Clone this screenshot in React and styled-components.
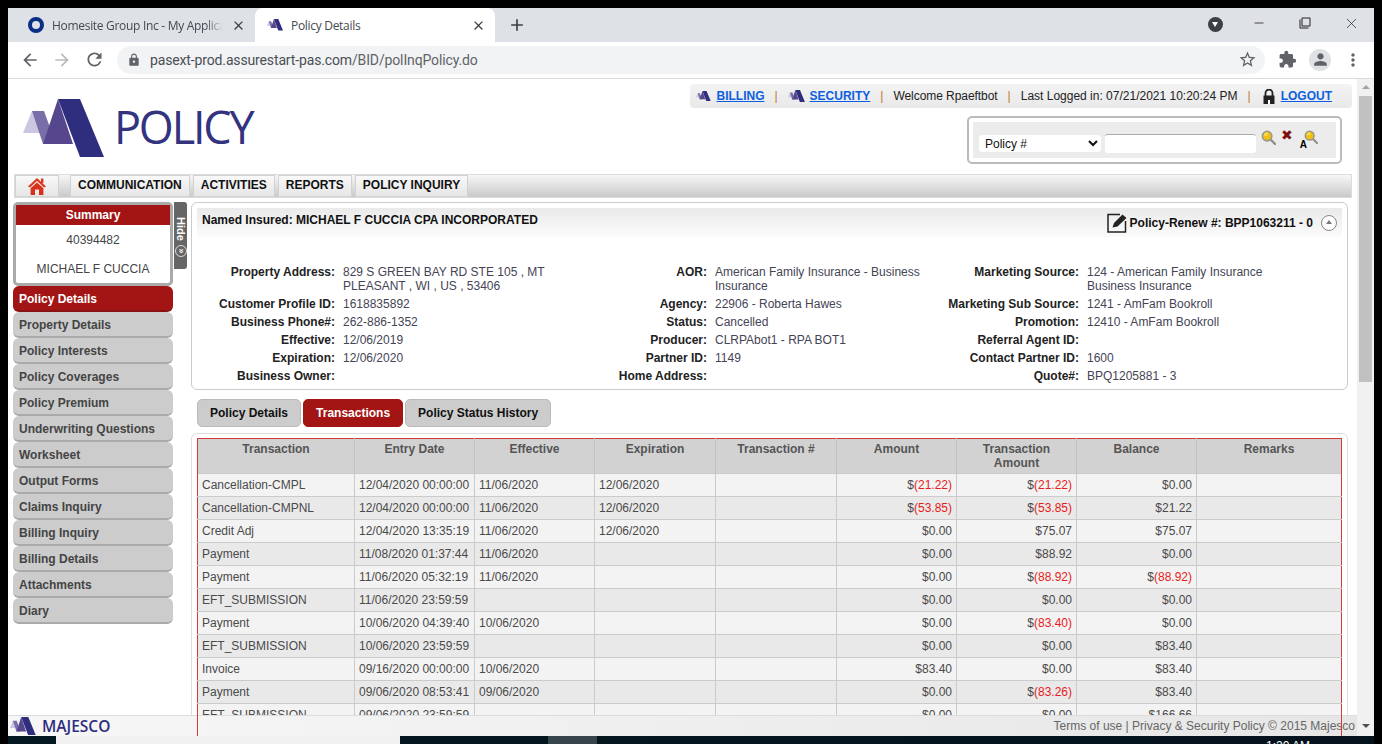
import React from 'react'
import styled, { createGlobalStyle } from 'styled-components'
import {
  MdArrowBack, MdArrowForward, MdRefresh, MdLock, MdStarBorder, MdExtension,
  MdMoreVert, MdClose, MdAdd, MdPerson, MdFilterNone,
} from 'react-icons/md'
import { Minus, X } from 'lucide-react'

const GlobalStyle = createGlobalStyle`
  html, body { margin: 0; padding: 0; height: 100%; background: #000; overflow: hidden; }
  * { box-sizing: border-box; }
  body { font-family: "Liberation Sans", Arial, sans-serif; font-size: 12px; }
`

const sidebarItems = [
  'Policy Details', 'Property Details', 'Policy Interests', 'Policy Coverages', 'Policy Premium',
  'Underwriting Questions', 'Worksheet', 'Output Forms', 'Claims Inquiry', 'Billing Inquiry',
  'Billing Details', 'Attachments', 'Diary',
]

const details = [
  ['Property Address:', '829 S GREEN BAY RD STE 105 , MT PLEASANT , WI , US , 53406', 'AOR:', 'American Family Insurance - Business Insurance', 'Marketing Source:', <>124 - American Family Insurance<br />Business Insurance</>],
  ['Customer Profile ID:', '1618835892', 'Agency:', '22906 - Roberta Hawes', 'Marketing Sub Source:', '1241 - AmFam Bookroll'],
  ['Business Phone#:', '262-886-1352', 'Status:', 'Cancelled', 'Promotion:', '12410 - AmFam Bookroll'],
  ['Effective:', '12/06/2019', 'Producer:', 'CLRPAbot1 - RPA BOT1', 'Referral Agent ID:', ''],
  ['Expiration:', '12/06/2020', 'Partner ID:', '1149', 'Contact Partner ID:', '1600'],
  ['Business Owner:', '', 'Home Address:', '', 'Quote#:', 'BPQ1205881 - 3'],
]

const columns = [
  ['Transaction', 157], ['Entry Date', 120], ['Effective', 120], ['Expiration', 121], ['Transaction #', 121],
  ['Amount', 120], ['Transaction Amount', 120], ['Balance', 120], ['Remarks', 145],
]

const rows = [
  ['Cancellation-CMPL', '12/04/2020 00:00:00', '11/06/2020', '12/06/2020', '$(21.22)', '$(21.22)', '$0.00'],
  ['Cancellation-CMPNL', '12/04/2020 00:00:00', '11/06/2020', '12/06/2020', '$(53.85)', '$(53.85)', '$21.22'],
  ['Credit Adj', '12/04/2020 13:35:19', '11/06/2020', '12/06/2020', '$0.00', '$75.07', '$75.07'],
  ['Payment', '11/08/2020 01:37:44', '11/06/2020', '', '$0.00', '$88.92', '$0.00'],
  ['Payment', '11/06/2020 05:32:19', '11/06/2020', '', '$0.00', '$(88.92)', '$(88.92)'],
  ['EFT_SUBMISSION', '11/06/2020 23:59:59', '', '', '$0.00', '$0.00', '$0.00'],
  ['Payment', '10/06/2020 04:39:40', '10/06/2020', '', '$0.00', '$(83.40)', '$0.00'],
  ['EFT_SUBMISSION', '10/06/2020 23:59:59', '', '', '$0.00', '$0.00', '$83.40'],
  ['Invoice', '09/16/2020 00:00:00', '10/06/2020', '', '$83.40', '$0.00', '$83.40'],
  ['Payment', '09/06/2020 08:53:41', '09/06/2020', '', '$0.00', '$(83.26)', '$83.40'],
  ['EFT_SUBMISSION', '09/06/2020 23:59:59', '', '', '$0.00', '$0.00', '$166.66'],
]

const LogoMark = ({ width }) => (
  <svg width={width} viewBox="0 0 81 58" style={{ display: 'block', flexShrink: 0 }}>
    <polygon points="0,34 9,12 18,34" fill="#cbc7e2" />
    <polygon points="9,12 21,12 33,45 20,45" fill="#7a6ea9" />
    <polygon points="35,0 20,45 50,45" fill="#56468e" />
    <polygon points="35,0 57,0 81,58 57,58" fill="#2f2e7e" />
  </svg>
)

const Magnifier = ({ size }) => (
  <svg width={size} height={size} viewBox="0 0 16 16" style={{ display: 'block' }}>
    <line x1="10" y1="10" x2="15" y2="15" stroke="#8d8d80" strokeWidth="2.4" strokeLinecap="round" />
    <circle cx="6.5" cy="6.5" r="5" fill="#f2c010" stroke="#9a9a88" strokeWidth="1.8" />
    <path d="M3 6 A4 4 0 0 1 7 2.5 L7 6 Z" fill="#f7dc5a" />
  </svg>
)

const HomeIcon = () => (
  <svg width="18" height="18" viewBox="0 0 18 18" style={{ display: 'block' }}>
    <path d="M9 1 L18 9.5 L16 10.5 L9 4 L2 10.5 L0 9.5 Z" fill="#dc3a1e" />
    <path d="M9 5.4 L15.4 11.2 V18 H11 V12.5 H7 V18 H2.6 V11.2 Z" fill="#d9301a" />
    <rect x="13" y="1.5" width="2.4" height="4.5" fill="#dc3a1e" />
  </svg>
)

const PadlockIcon = () => (
  <svg width="12" height="15" viewBox="0 0 12 15" style={{ display: 'block' }}>
    <path d="M2.5 7 V4 A3.5 3.5 0 0 1 9.5 4 V7" fill="none" stroke="#222" strokeWidth="1.8" />
    <rect x="0.5" y="6.5" width="11" height="8.5" fill="#222" />
    <rect x="5" y="11" width="2" height="4" fill="#fff" />
  </svg>
)

const EditIcon = () => (
  <svg width="21" height="20" viewBox="0 0 21 20" style={{ display: 'block' }}>
    <path d="M13 1.5 H1 V19 H18.5 V8" fill="none" stroke="#222" strokeWidth="1.5" />
    <path d="M5.5 14.5 L7 10 L15.5 1.5 L19.5 5 L10.5 13.5 Z" fill="#222" />
  </svg>
)

const App = () => (
  <Screen>
    <GlobalStyle />
    <BrowserWindow>
      <TabStrip>
        <Tab>
          <RingIcon />
          <TabTitle $fade>Homesite Group Inc - My Application</TabTitle>
          <TabClose><MdClose size={15} /></TabClose>
        </Tab>
        <Tab $active>
          <LogoMark width={16} />
          <TabTitle>Policy Details</TabTitle>
          <TabClose><MdClose size={15} /></TabClose>
        </Tab>
        <NewTab><MdAdd size={20} /></NewTab>
        <WindowControls>
          <ProfileDot />
          <WindowButton><Minus size={14} strokeWidth={1.4} /></WindowButton>
          <WindowButton><MdFilterNone size={12} /></WindowButton>
          <WindowButton><X size={17} strokeWidth={1} /></WindowButton>
        </WindowControls>
      </TabStrip>

      <Toolbar>
        <ToolButton><MdArrowBack size={20} /></ToolButton>
        <ToolButton $dim><MdArrowForward size={20} /></ToolButton>
        <ToolButton><MdRefresh size={21} /></ToolButton>
        <Omnibox>
          <MdLock size={14} color="#5f6368" />
          <Url><b>pasext-prod.assurestart-pas.com</b>/BID/polInqPolicy.do</Url>
          <MdStarBorder size={19} color="#5f6368" />
        </Omnibox>
        <ToolActions>
          <MdExtension size={19} color="#5f6368" />
          <Avatar><MdPerson size={19} color="#5f6368" /></Avatar>
          <MdMoreVert size={20} color="#5f6368" />
        </ToolActions>
      </Toolbar>

      <Viewport>
        <Page>
          <Header>
            <Brand>
              <LogoMark width={81} />
              <BrandName>POLICY</BrandName>
            </Brand>
            <HeaderRight>
              <UtilityBar>
                <LogoMark width={15} />
                <UtilityLink $icon>BILLING</UtilityLink>
                <Divider>|</Divider>
                <LogoMark width={17} />
                <UtilityLink $icon>SECURITY</UtilityLink>
                <Divider>|</Divider>
                <WelcomeText>Welcome Rpaeftbot</WelcomeText>
                <Divider>|</Divider>
                <span>Last Logged in: 07/21/2021 10:20:24 PM</span>
                <Divider>|</Divider>
                <PadlockHolder><PadlockIcon /></PadlockHolder>
                <UtilityLink>LOGOUT</UtilityLink>
              </UtilityBar>
              <SearchBox>
                <SearchInner>
                  <SearchSelect defaultValue="policy">
                    <option value="policy">Policy #</option>
                  </SearchSelect>
                  <SearchInput />
                  <SearchIcon $left={5}><Magnifier size={15} /></SearchIcon>
                  <ClearMark>✖</ClearMark>
                  <SearchIcon $left={11}>
                    <Magnifier size={14} />
                    <SmallA>A</SmallA>
                  </SearchIcon>
                </SearchInner>
              </SearchBox>
            </HeaderRight>
          </Header>

          <NavBar>
            <HomeButton><HomeIcon /></HomeButton>
            <NavButton>COMMUNICATION</NavButton>
            <NavButton>ACTIVITIES</NavButton>
            <NavButton>REPORTS</NavButton>
            <NavButton>POLICY INQUIRY</NavButton>
          </NavBar>

          <Body>
            <Sidebar>
              <SummaryCard>
                <SummaryTitle>Summary</SummaryTitle>
                <SummaryLine>40394482</SummaryLine>
                <SummaryLine>MICHAEL F CUCCIA</SummaryLine>
              </SummaryCard>
              {sidebarItems.map((item, i) => (
                <SideItem key={item} $active={i === 0}>{item}</SideItem>
              ))}
            </Sidebar>
            <HideTab>
              <HideText>Hide</HideText>
              <HideCircle>«</HideCircle>
            </HideTab>

            <Main>
              <Panel>
                <PanelHead>
                  <span>Named Insured: MICHAEL F CUCCIA CPA INCORPORATED</span>
                  <PanelHeadRight>
                    <EditIcon />
                    <span>Policy-Renew #: BPP1063211 - 0</span>
                    <CollapseButton />
                  </PanelHeadRight>
                </PanelHead>
                <DetailGrid>
                  {details.flat().map((cell, i) => (
                    i % 2 === 0
                      ? <DetailLabel key={i}>{cell}</DetailLabel>
                      : <DetailValue key={i}>{cell}</DetailValue>
                  ))}
                </DetailGrid>
              </Panel>

              <TabRow>
                <PillTab>Policy Details</PillTab>
                <PillTab $active>Transactions</PillTab>
                <PillTab>Policy Status History</PillTab>
              </TabRow>

              <TablePanel>
                <Table>
                  <colgroup>
                    {columns.map(([name, w]) => <col key={name} width={w} />)}
                  </colgroup>
                  <thead>
                    <tr>
                      {columns.map(([name]) => <Th key={name}>{name}</Th>)}
                    </tr>
                  </thead>
                  <tbody>
                    {rows.map((row, i) => (
                      <Tr key={i} $odd={i % 2 === 1}>
                        <Td>{row[0]}</Td>
                        <Td>{row[1]}</Td>
                        <Td>{row[2]}</Td>
                        <Td>{row[3]}</Td>
                        <Td />
                        {row.slice(4).map((money, j) => (
                          <Td key={j} $right><Money value={money} /></Td>
                        ))}
                        <Td />
                      </Tr>
                    ))}
                  </tbody>
                </Table>
              </TablePanel>
            </Main>
          </Body>

          <Footer>
            <FooterBrand>
              <LogoMark width={26} />
              <FooterName>MAJESCO</FooterName>
            </FooterBrand>
            <FooterRule $left={189} />
            <FooterRule $left={1333} />
            <FooterLinks>Terms of use | Privacy &amp; Security Policy © 2015 Majesco</FooterLinks>
          </Footer>
        </Page>

        <Scrollbar>
          <ScrollArrow $up />
          <ScrollThumb />
          <ScrollSpacer />
          <ScrollArrow />
        </Scrollbar>
      </Viewport>
    </BrowserWindow>

    <Taskbar>
      <TaskSearch />
      <TaskTile />
      <TaskClock>1:20 AM</TaskClock>
    </Taskbar>
  </Screen>
)

const Money = ({ value }) => {
  if (value.startsWith('$(')) {
    return <>$<Negative>{value.slice(1)}</Negative></>
  }
  return value
}

const Screen = styled.div`
  width: 1382px;
  height: 744px;
  padding: 8px 8px 0;
  display: flex;
  flex-direction: column;
  overflow: hidden;
  background: #000;
`

const BrowserWindow = styled.div`
  height: 728px;
  flex-shrink: 0;
  display: flex;
  flex-direction: column;
  background: #fff;
  overflow: hidden;
`

const TabStrip = styled.div`
  height: 34px;
  flex-shrink: 0;
  display: flex;
  align-items: stretch;
  background: #dee1e6;
`

const Tab = styled.div`
  width: ${({ $active }) => ($active ? '240px' : '247px')};
  display: flex;
  align-items: center;
  gap: 8px;
  padding: 0 9px 0 ${({ $active }) => ($active ? '12px' : '20px')};
  border-radius: 8px 8px 0 0;
  background: ${({ $active }) => ($active ? '#fff' : 'transparent')};
  color: #45494e;
  font-family: "Open Sans", sans-serif;
  font-size: 12px;
  letter-spacing: -0.3px;
`

const RingIcon = styled.span`
  width: 16px;
  height: 16px;
  flex-shrink: 0;
  border-radius: 50%;
  border: 4px solid #0b2f86;
`

const TabTitle = styled.span`
  flex: 1;
  white-space: nowrap;
  overflow: hidden;
  mask-image: ${({ $fade }) => ($fade ? 'linear-gradient(to right, #000 90%, transparent)' : 'none')};
`

const TabClose = styled.span`
  display: flex;
  color: #3c4043;
`

const NewTab = styled.span`
  margin-left: 12px;
  display: flex;
  align-items: center;
  color: #3c4043;
`

const WindowControls = styled.div`
  margin-left: auto;
  display: flex;
  align-items: center;
  padding-bottom: 4px;
`

const ProfileDot = styled.span`
  width: 15px;
  height: 15px;
  margin: 3px 13px 0 0;
  border-radius: 50%;
  background: #3c4043;
  position: relative;
  &::after {
    content: '';
    position: absolute;
    left: 4px;
    top: 5px;
    border-left: 3.5px solid transparent;
    border-right: 3.5px solid transparent;
    border-top: 5px solid #fff;
  }
`

const WindowButton = styled.span`
  width: 46px;
  display: flex;
  justify-content: center;
  color: #222;
`

const Toolbar = styled.div`
  height: 37px;
  flex-shrink: 0;
  display: flex;
  align-items: center;
  padding: 0 11px 1px 6px;
  background: #fff;
  border-bottom: 1px solid #dadce0;
`

const ToolButton = styled.span`
  width: 32px;
  display: flex;
  justify-content: center;
  color: ${({ $dim }) => ($dim ? '#b8babd' : '#5f6368')};
`

const Omnibox = styled.div`
  width: 1148px;
  height: 28px;
  margin-left: 7px;
  padding: 0 8px 0 10px;
  display: flex;
  align-items: center;
  border-radius: 14px;
  background: #f1f3f4;
`

const Url = styled.span`
  flex: 1;
  margin-left: 9px;
  font-family: Roboto, sans-serif;
  font-size: 14px;
  letter-spacing: -0.14px;
  color: #5f6368;
  b {
    font-weight: 400;
    color: #4b4f54;
  }
`

const ToolActions = styled.div`
  flex: 1;
  display: flex;
  align-items: center;
  justify-content: space-between;
  padding-left: 13px;
`

const Avatar = styled.span`
  width: 22px;
  height: 22px;
  display: flex;
  align-items: center;
  justify-content: center;
  border-radius: 50%;
  background: #dfe1e5;
`

const Viewport = styled.div`
  flex: 1;
  min-height: 0;
  display: flex;
`

const Page = styled.div`
  flex: 1;
  min-width: 0;
  position: relative;
  overflow: hidden;
  background: #fff;
`

const Header = styled.div`
  height: 95px;
  display: flex;
  justify-content: space-between;
  padding: 0 5px 0 15px;
`

const Brand = styled.div`
  display: flex;
  align-items: flex-start;
  gap: 10px;
  padding-top: 20px;
`

const BrandName = styled.span`
  font-family: "Open Sans", sans-serif;
  font-size: 45px;
  line-height: 1;
  margin-top: 5px;
  letter-spacing: -2.2px;
  color: #33337f;
`

const HeaderRight = styled.div`
  display: flex;
  flex-direction: column;
  align-items: flex-end;
  padding-top: 5px;
`

const UtilityBar = styled.div`
  width: 662px;
  height: 24px;
  display: flex;
  align-items: center;
  justify-content: flex-end;
  padding-right: 20px;
  border-radius: 4px;
  background: linear-gradient(to bottom, #f3f3f3, #e9e9e9);
  color: #222;
`

const UtilityLink = styled.a`
  margin-left: ${({ $icon }) => ($icon ? '5px' : '6px')};
  font-weight: 700;
  color: #0d5fe0;
  text-decoration: underline;
`

const WelcomeText = styled.span`
  letter-spacing: -0.06px;
`

const Divider = styled.span`
  margin: 0 10px;
  color: #b8792a;
`

const PadlockHolder = styled.span`
  margin-left: 2px;
`

const SearchBox = styled.div`
  width: 375px;
  height: 48px;
  margin: 8px 10px 0 0;
  padding: 4px;
  border: 2px solid #bbb;
  border-radius: 5px;
`

const SearchInner = styled.div`
  height: 100%;
  display: flex;
  align-items: flex-start;
  padding: 12px 6px 0;
  background: #ececec;
`

const SearchSelect = styled.select`
  width: 122px;
  height: 17px;
  margin-top: 1px;
  padding-left: 2px;
  border: none;
  border-radius: 4px;
  background-color: #fff;
  font-family: "Liberation Sans", sans-serif;
  font-size: 12px;
  color: #111;
`

const SearchInput = styled.input`
  width: 151px;
  height: 19px;
  margin-left: 4px;
  border: none;
  border-top: 1px solid #aaa;
  border-radius: 3px;
  background: #fff;
`

const SearchIcon = styled.span`
  position: relative;
  margin: -4px 0 0 ${({ $left }) => $left}px;
`

const SmallA = styled.span`
  position: absolute;
  left: -4px;
  top: 10px;
  font-size: 10px;
  font-weight: 700;
  line-height: 1;
  color: #000;
`

const ClearMark = styled.span`
  margin: -7px 0 0 5px;
  font-family: "DejaVu Sans", sans-serif;
  font-size: 14px;
  line-height: 16px;
  color: #7c1010;
`

const NavBar = styled.div`
  height: 24px;
  margin: 0 5px 0 6px;
  display: flex;
  gap: 3px;
  border: 1px solid #dcdcdc;
  background: linear-gradient(to bottom, #f7f7f7, #c9c9c9);
`

const NavButton = styled.div`
  height: 22px;
  padding: 0 7px 2px;
  display: flex;
  align-items: center;
  border: 1px solid #d2d2d2;
  background: linear-gradient(to bottom, #f9f9f9, #e6e6e6);
  font-weight: 700;
  color: #111;
`

const HomeButton = styled(NavButton)`
  width: 44px;
  margin-right: 8px;
  justify-content: center;
  padding: 0;
`

const Body = styled.div`
  display: flex;
  align-items: flex-start;
  padding: 4px 0 0 5px;
`

const Sidebar = styled.div`
  width: 160px;
  flex-shrink: 0;
`

const SummaryCard = styled.div`
  height: 84px;
  border: 3px solid #aaa;
  border-radius: 5px;
  background: #fff;
  text-align: center;
  color: #444;
`

const SummaryTitle = styled.div`
  height: 20px;
  line-height: 21px;
  background: #a31515;
  color: #fff;
  font-weight: 700;
`

const SummaryLine = styled.div`
  height: 29px;
  line-height: 31px;
`

const SideItem = styled.div`
  height: 26px;
  line-height: 26px;
  padding-left: 6px;
  border-radius: 6px;
  border-bottom: 2px solid ${({ $active }) => ($active ? '#8a1212' : '#aaa')};
  background: ${({ $active }) => ($active ? '#a31515' : '#cccccc')};
  color: ${({ $active }) => ($active ? '#fff' : '#444')};
  font-weight: 700;
`

const HideTab = styled.div`
  width: 13px;
  height: 67px;
  flex-shrink: 0;
  margin: 0 4px 0 1px;
  display: flex;
  flex-direction: column;
  align-items: center;
  padding-top: 15px;
  border-radius: 0 3px 3px 0;
  background: #666;
  color: #fff;
`

const HideText = styled.span`
  writing-mode: vertical-rl;
  font-size: 11px;
  font-weight: 700;
  line-height: 13px;
`

const HideCircle = styled.span`
  width: 12px;
  height: 12px;
  flex-shrink: 0;
  margin-top: 4px;
  display: flex;
  align-items: center;
  justify-content: center;
  border: 1px solid #ddd;
  border-radius: 50%;
  font-size: 9px;
  font-weight: 700;
  line-height: 1;
  transform: rotate(-90deg);
`

const Main = styled.div`
  width: 1157px;
  flex-shrink: 0;
`

const Panel = styled.div`
  height: 188px;
  padding: 5px;
  border: 1px solid #ccc;
  border-radius: 6px;
`

const PanelHead = styled.div`
  height: 29px;
  display: flex;
  justify-content: space-between;
  padding: 5px 5px 0 5px;
  background: linear-gradient(to bottom, #eaeaea, #fbfbfb);
  font-weight: 700;
  line-height: 14px;
  color: #111;
`

const PanelHeadRight = styled.div`
  display: flex;
  align-items: center;
  height: 20px;
  gap: 2px;
`

const CollapseButton = styled.span`
  width: 16px;
  height: 16px;
  margin-left: 6px;
  position: relative;
  border: 1px solid #888;
  border-radius: 50%;
  background: #fff;
  &::after {
    content: '';
    position: absolute;
    left: 3.5px;
    top: 4px;
    border-left: 3.5px solid transparent;
    border-right: 3.5px solid transparent;
    border-bottom: 4px solid #777;
  }
`

const DetailGrid = styled.div`
  display: grid;
  grid-template-columns: 138px 210px 146px 210px 146px 254px;
  column-gap: 8px;
  row-gap: 4px;
  padding-top: 28px;
  line-height: 14px;
`

const DetailLabel = styled.div`
  text-align: right;
  font-weight: 700;
  color: #222;
`

const DetailValue = styled.div`
  color: #445;
`

const TabRow = styled.div`
  display: flex;
  gap: 2px;
  margin: 9px 0 6px 6px;
`

const PillTab = styled.div`
  height: 28px;
  line-height: 26px;
  padding: 0 12px;
  border: 1px solid ${({ $active }) => ($active ? '#a31515' : '#bbb')};
  border-radius: 5px;
  background: ${({ $active }) => ($active ? '#a31515' : '#cccccc')};
  color: ${({ $active }) => ($active ? '#fff' : '#111')};
  font-weight: 700;
`

const TablePanel = styled.div`
  padding: 4px 5px 8px;
  border: 1px solid #ddd;
  border-radius: 6px;
`

const Table = styled.table`
  width: 1144px;
  table-layout: fixed;
  border-collapse: collapse;
  border: 1px solid #d33a3a;
`

const Th = styled.th`
  height: 35px;
  padding: 3px 5px 0;
  vertical-align: top;
  background: #d2d2d2;
  border-right: 1px solid #c2c2c2;
  font-weight: 700;
  line-height: 14px;
  color: #555;
  &:last-child {
    border-right: 1px solid #d33a3a;
  }
`

const Tr = styled.tr`
  background: ${({ $odd }) => ($odd ? '#e9e9e9' : '#f3f3f3')};
`

const Td = styled.td`
  height: 23px;
  padding: 0 4px;
  border: 1px solid #cbcbcb;
  text-align: ${({ $right }) => ($right ? 'right' : 'left')};
  white-space: nowrap;
  color: #4a4a4a;
  &:first-child {
    border-left: 1px solid #d33a3a;
  }
  &:last-child {
    border-right: 1px solid #d33a3a;
  }
`

const Negative = styled.span`
  color: #e81c1c;
`

const Footer = styled.div`
  position: absolute;
  left: 0;
  right: 0;
  bottom: 0;
  height: 21px;
  display: flex;
  align-items: center;
  justify-content: space-between;
  padding: 0 2px 0 2px;
  border-top: 1px solid #ddd;
  background: linear-gradient(to right, #f7f7f7, #e6e6e6);
`

const FooterBrand = styled.div`
  display: flex;
  align-items: center;
  gap: 6px;
`

const FooterName = styled.span`
  font-family: "Open Sans", sans-serif;
  font-size: 15.5px;
  font-weight: 600;
  color: #2f2e7e;
`

const FooterRule = styled.span`
  position: absolute;
  top: -1px;
  bottom: 0;
  left: ${({ $left }) => $left}px;
  width: 1px;
  background: #d33a3a;
`

const FooterLinks = styled.span`
  margin-bottom: 1px;
  color: #666;
`

const Scrollbar = styled.div`
  width: 17px;
  flex-shrink: 0;
  display: flex;
  flex-direction: column;
  align-items: center;
  background: #f1f1f1;
`

const ScrollArrow = styled.span`
  height: 17px;
  width: 100%;
  flex-shrink: 0;
  position: relative;
  &::after {
    content: '';
    position: absolute;
    left: 4.5px;
    top: ${({ $up }) => ($up ? '6px' : '5px')};
    border-left: 4px solid transparent;
    border-right: 4px solid transparent;
    ${({ $up }) => ($up ? 'border-bottom: 4px solid #a3a3a3;' : 'border-top: 4px solid #505050;')}
  }
`

const ScrollThumb = styled.div`
  width: 13px;
  height: 286px;
  flex-shrink: 0;
  background: #c1c1c1;
`

const ScrollSpacer = styled.div`
  flex: 1;
`

const Taskbar = styled.div`
  height: 8px;
  flex-shrink: 0;
  display: flex;
  overflow: hidden;
  background: linear-gradient(to right, #03181f, #04121c);
`

const TaskSearch = styled.div`
  width: 344px;
  margin-left: 48px;
  background: #f0f0f0;
`

const TaskTile = styled.div`
  width: 49px;
  margin-left: 148px;
  background: #36454c;
`

const TaskClock = styled.span`
  margin: 3px 0 0 669px;
  white-space: nowrap;
  font-size: 12px;
  line-height: 14px;
  color: #fff;
`

export default App
